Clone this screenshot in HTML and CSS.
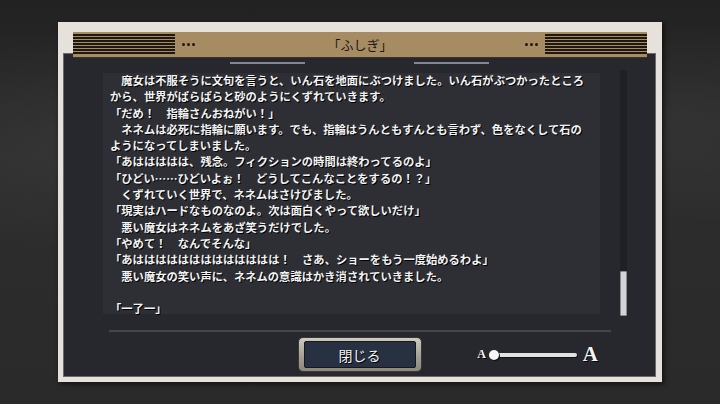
FILE: index.html
```html
<!DOCTYPE html>
<html lang="ja">
<head>
  <meta charset="UTF-8">
  <title>ふしぎ</title>
  <meta name="viewport" content="width=device-width, initial-scale=1.0">
  <link rel="stylesheet" href="styles.css">
</head>
<body>

  <div class="frame">
    <div class="title-bar">
      <div class="stripes"></div>
      <div class="dots"><span></span><span></span><span></span></div>
      <div class="title">「ふしぎ」</div>
      <div class="dots"><span></span><span></span><span></span></div>
      <div class="stripes"></div>
    </div>

    <div class="panel">
      <div class="tabs"><span></span><span></span></div>

      <div class="content">
        <div class="textbox">
          <div class="story">
            <div class="line">　魔女は不服そうに文句を言うと、いん石を地面にぶつけました。いん石がぶつかったところ</div>
            <div class="line">から、世界がぱらぱらと砂のようにくずれていきます。</div>
            <div class="line">「だめ！　指輪さんおねがい！」</div>
            <div class="line">　ネネムは必死に指輪に願います。でも、指輪はうんともすんとも言わず、色をなくして石の</div>
            <div class="line">ようになってしまいました。</div>
            <div class="line">「あははははは、残念。フィクションの時間は終わってるのよ」</div>
            <div class="line">「ひどい……ひどいよぉ！　どうしてこんなことをするの！？」</div>
            <div class="line">　くずれていく世界で、ネネムはさけびました。</div>
            <div class="line">「現実はハードなものなのよ。次は面白くやって欲しいだけ」</div>
            <div class="line">　悪い魔女はネネムをあざ笑うだけでした。</div>
            <div class="line">「やめて！　なんでそんな」</div>
            <div class="line">「あははははははははははははは！　さあ、ショーをもう一度始めるわよ」</div>
            <div class="line">　悪い魔女の笑い声に、ネネムの意識はかき消されていきました。</div>
            <div class="line">&nbsp;</div>
            <div class="line">「一了一」</div>
          </div>
        </div>
        <div class="scroll"><div class="thumb"></div></div>
      </div>

      <div class="sep"></div>

      <div class="footer">
        <div></div>
        <button class="btn"><span class="btn-inner">閉じる</span></button>
        <div class="size">
          <span class="a-small">A</span>
          <div class="track"><span class="knob"></span></div>
          <span class="a-big">A</span>
        </div>
      </div>
    </div>
  </div>

</body>
</html>
```

FILE: styles.css
```css
body {
  margin: 0;
  height: 404px;
  overflow: hidden;
  font-family: "Noto Sans CJK JP", sans-serif;
  background-color: #2a2a2a;
  background-image:
    radial-gradient(ellipse at 12% 35%, rgba(70,70,70,0.35), transparent 30%),
    radial-gradient(ellipse at 95% 30%, rgba(70,70,70,0.3), transparent 25%),
    linear-gradient(#222222, #2d2d2d 40%, #2a2a2a);
}

.frame {
  width: 604px;
  height: 360px;
  margin: 22px auto 0;
  box-sizing: border-box;
  padding: 10px 6px 5px 5px;
  background: #e7e1db;
  display: flex;
  flex-direction: column;
  box-shadow: 2px 2px 5px rgba(0,0,0,0.6);
}

.title-bar {
  height: 25px;
  margin: 0 9px 0 10px;
  background: #a68b63;
  display: flex;
  align-items: center;
  position: relative;
  z-index: 1;
  box-shadow: 0 1px 0 #3d3428;
}

.stripes {
  width: 102px;
  height: 21px;
  background: repeating-linear-gradient(to bottom, #1d1912 0 1.6px, #a68b63 1.6px 3px);
}

.dots {
  display: flex;
  gap: 2px;
  margin: 0 7px;
}

.dots span {
  width: 3px;
  height: 3px;
  border-radius: 50%;
  background: #1d1912;
}

.title {
  flex: 1;
  text-align: center;
  font-size: 13px;
  color: #1a1814;
}

.panel {
  flex: 1;
  margin-top: -4px;
  background: #27282d;
  border: 1px solid #6b6a68;
  display: flex;
  flex-direction: column;
}

.tabs {
  display: flex;
  justify-content: center;
  gap: 109px;
  margin-top: 8px;
}

.tabs span {
  width: 75px;
  height: 2px;
  background: #85868a;
}

.content {
  display: flex;
  align-items: flex-start;
  margin-top: 6px;
  padding-left: 39px;
}

.textbox {
  width: 497px;
  height: 241px;
  margin-top: 3px;
  box-sizing: border-box;
  padding-left: 7px;
  background: #2e2f34;
}

.story {
  margin-top: -1px;
}

.line {
  font-size: 11.3px;
  line-height: 16.3px;
  font-weight: bold;
  color: #f3f3f3;
  white-space: nowrap;
  text-shadow: 1px 1px 0 #000;
}

.scroll {
  width: 7px;
  height: 246px;
  margin-left: 20px;
  background: #1f2023;
  display: flex;
  flex-direction: column;
  justify-content: flex-end;
}

.thumb {
  height: 45px;
  box-sizing: border-box;
  background: #d4d4d4;
  border: 1px solid #8c8c8c;
  border-radius: 1px;
}

.sep {
  width: 502px;
  height: 2px;
  margin: 14px 0 0 45px;
  background: #45464b;
}

.footer {
  display: grid;
  grid-template-columns: 1fr auto 1fr;
  align-items: center;
  margin-top: 5px;
}

.btn {
  width: 124px;
  height: 35px;
  box-sizing: border-box;
  padding: 3px 5px;
  border: 1px solid #3a3833;
  border-radius: 5px;
  background: linear-gradient(#cfcabe, #a29d91 60%, #8c877c);
  font-family: inherit;
  cursor: pointer;
}

.btn-inner {
  display: flex;
  align-items: center;
  justify-content: center;
  height: 100%;
  box-sizing: border-box;
  border: 1px solid #15181e;
  border-radius: 2px;
  background: #283142;
  color: #f4f4f4;
  font-size: 14px;
  text-shadow: 1px 1px 0 #000;
}

.size {
  justify-self: end;
  margin-right: 57px;
  display: flex;
  align-items: center;
}

.a-small,
.a-big {
  font-family: "Liberation Serif", serif;
  font-weight: bold;
  color: #f4f4f4;
  text-shadow: 1px 1px 0 #000;
}

.a-small {
  font-size: 12px;
  margin-right: 3px;
}

.a-big {
  font-size: 21px;
  margin-left: 6px;
}

.track {
  width: 88px;
  height: 4px;
  border-radius: 2px;
  background: #e2e2e2;
  box-shadow: 1px 1px 0 #111;
  display: flex;
  align-items: center;
}

.knob {
  width: 10px;
  height: 10px;
  border-radius: 50%;
  background: #f6f6f6;
  box-shadow: 1px 1px 0 #111;
}
```
